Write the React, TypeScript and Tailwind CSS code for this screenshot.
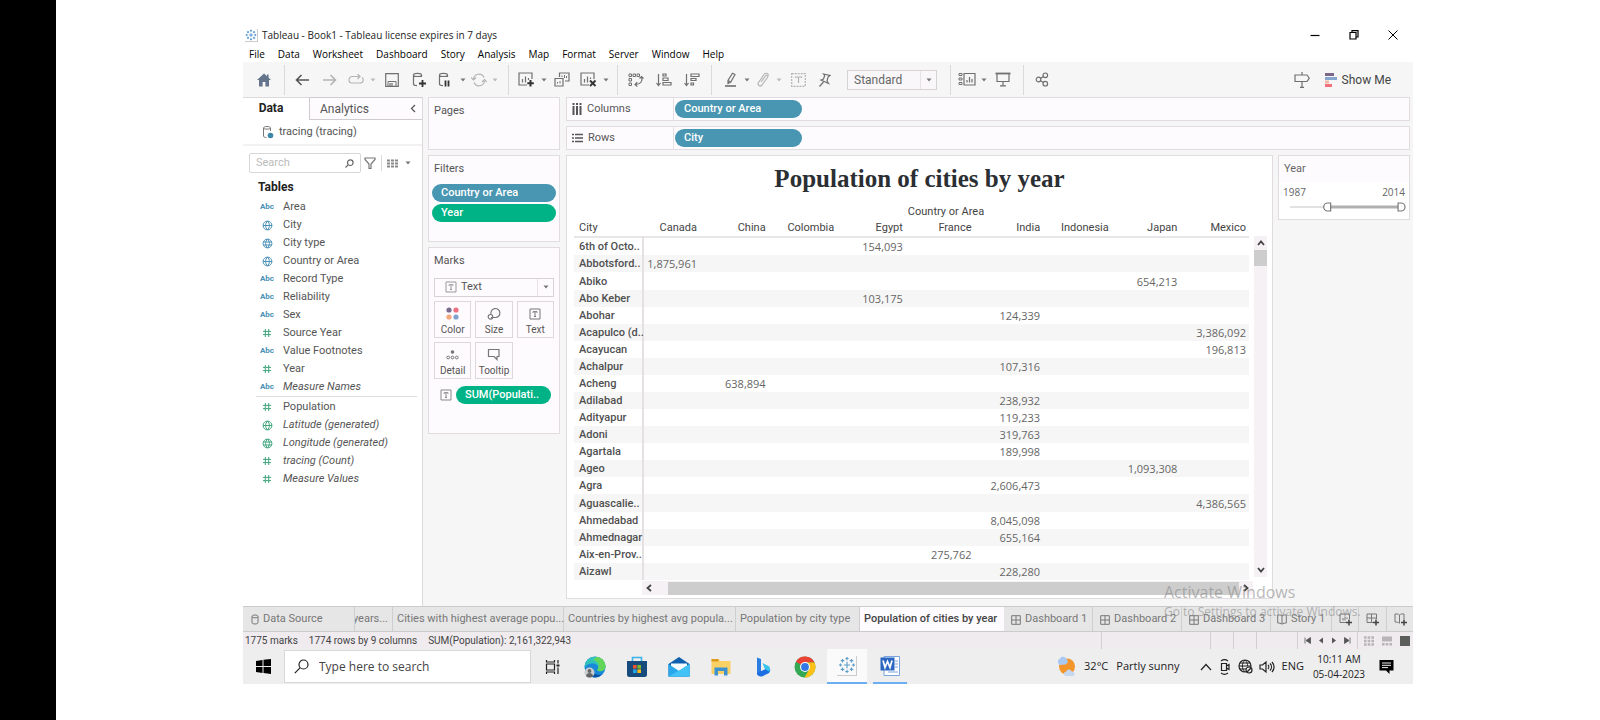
import type { ReactNode } from "react";

function Ico({ w = 16, h = 16, children, className = "" }: { w?: number; h?: number; children: ReactNode; className?: string }) {
  return (
    <svg width={w} height={h} viewBox={`0 0 ${w} ${h}`} fill="none" stroke="currentColor" strokeWidth="1.2" className={`shrink-0 ${className}`} aria-hidden="true">
      {children}
    </svg>
  );
}

function Tool({ label, width = "w-7", className = "text-[#707070]", children }: { label: string; width?: string; className?: string; children: ReactNode }) {
  return (
    <button type="button" aria-label={label} className={`flex h-7 shrink-0 items-center justify-center ${width} ${className}`}>
      {children}
    </button>
  );
}

function Caret({ className = "text-[#777]" }: { className?: string }) {
  return (
    <span className={`flex w-2.5 shrink-0 items-center justify-center ${className}`}>
      <Ico w={6} h={4}><path d="M0.5 0.5h5L3 3.6z" fill="currentColor" stroke="none" /></Ico>
    </span>
  );
}

const Sep = ({ className = "" }: { className?: string }) => <span className={`h-[30px] w-px shrink-0 bg-[#dcd8dc] ${className}`} />;

const TableauMark = ({ size, color }: { size: number; color: string }) => (
  <svg width={size} height={size} viewBox="0 0 20 20" stroke={color} strokeWidth="1.3" fill="none" aria-hidden="true">
    <path d="M10 6.500v7M6.500 10h7M10 1v3.600M8.200 2.800h3.600M10 15.400V19M8.200 17.200h3.600M1 10h3.600M2.800 8.200v3.600M15.400 10H19M17.200 8.200v3.600M5 3.200v4M3 5.200h4M15 3.200v4M13 5.200h4M5 12.800v4M3 14.800h4M15 12.800v4M13 14.800h4" />
  </svg>
);

function Globe({ lat }: { lat?: boolean }) {
  return (
    <Ico w={11} h={11}>
      <circle cx="5.500" cy="5.500" r="4.400" strokeWidth="1" />
      {lat ? <path d="M1.200 4h8.600M1.200 7h8.600M5.500 1c-2.500 2.600-2.500 6.400 0 9c2.500-2.600 2.500-6.400 0-9" strokeWidth="1" /> : <path d="M1.200 5.500h8.600M5.500 1c-2.500 2.600-2.500 6.400 0 9c2.500-2.600 2.500-6.400 0-9" strokeWidth="1" />}
    </Ico>
  );
}

const Hash = () => (
  <Ico w={10} h={10}><path d="M3.300 1v8M6.700 1v8M1 3.400h8M1 6.600h8" strokeWidth="1" /></Ico>
);

const TBox = ({ className = "" }: { className?: string }) => (
  <Ico w={12} h={12} className={className}>
    <path d="M1 1h10v10H1z" strokeWidth="1" />
    <path d="M4 4.800V3.700h4v1.100M6 3.700v4.800M5 8.500h2" strokeWidth="1" />
  </Ico>
);

type Kind = "abc" | "globe" | "globe2" | "hash";
type Field = { name: string; kind: Kind; green?: boolean; italic?: boolean };

const dimensions: Field[] = [
  { name: "Area", kind: "abc" },
  { name: "City", kind: "globe" },
  { name: "City type", kind: "globe2" },
  { name: "Country or Area", kind: "globe" },
  { name: "Record Type", kind: "abc" },
  { name: "Reliability", kind: "abc" },
  { name: "Sex", kind: "abc" },
  { name: "Source Year", kind: "hash", green: true },
  { name: "Value Footnotes", kind: "abc" },
  { name: "Year", kind: "hash", green: true },
  { name: "Measure Names", kind: "abc", italic: true },
];

const measures: Field[] = [
  { name: "Population", kind: "hash", green: true },
  { name: "Latitude (generated)", kind: "globe", green: true, italic: true },
  { name: "Longitude (generated)", kind: "globe2", green: true, italic: true },
  { name: "tracing (Count)", kind: "hash", green: true, italic: true },
  { name: "Measure Values", kind: "hash", green: true, italic: true },
];

function FieldRow({ f }: { f: Field }) {
  return (
    <li className="flex h-[18px] items-center gap-1.5 pl-[14px]">
      <span className={`flex w-5 justify-center ${f.green ? "text-[#3fa47c]" : "text-[#4a8fb5]"}`}>
        {f.kind === "abc" ? <span className="text-[8px] font-bold">Abc</span> : f.kind === "hash" ? <Hash /> : <Globe lat={f.kind === "globe2"} />}
      </span>
      <span className={f.italic ? "italic" : ""}>{f.name}</span>
    </li>
  );
}

const countries = ["Canada", "China", "Colombia", "Egypt", "France", "India", "Indonesia", "Japan", "Mexico"];
const rows: [string, number, string][] = [
  ["6th of Octo..", 3, "154,093"],
  ["Abbotsford..", 0, "1,875,961"],
  ["Abiko", 7, "654,213"],
  ["Abo Keber", 3, "103,175"],
  ["Abohar", 5, "124,339"],
  ["Acapulco (d..", 8, "3,386,092"],
  ["Acayucan", 8, "196,813"],
  ["Achalpur", 5, "107,316"],
  ["Acheng", 1, "638,894"],
  ["Adilabad", 5, "238,932"],
  ["Adityapur", 5, "119,233"],
  ["Adoni", 5, "319,763"],
  ["Agartala", 5, "189,998"],
  ["Ageo", 7, "1,093,308"],
  ["Agra", 5, "2,606,473"],
  ["Aguascalie..", 8, "4,386,565"],
  ["Ahmedabad", 5, "8,045,098"],
  ["Ahmednagar", 5, "655,164"],
  ["Aix-en-Prov..", 4, "275,762"],
  ["Aizawl", 5, "228,280"],
];

function Pill({ children, green, className = "" }: { children: ReactNode; green?: boolean; className?: string }) {
  return (
    <button type="button" className={`flex h-[18px] items-center rounded-full px-[9px] pt-px text-[11px] font-medium text-white ${green ? "bg-[#00b386]" : "bg-[#4996b2]"} ${className}`}>
      {children}
    </button>
  );
}

const card = "border border-[#e0dce0] bg-[#fefbfe]";

function TitleBar() {
  return (
    <header className="bg-white font-['Open_Sans',sans-serif] text-black">
      <div className="flex h-[18px] items-center pl-[2px]">
        <span className="flex size-[13px] items-center justify-center border-r border-b border-[#ccc]"><TableauMark size={12} color="#3d86c6" /></span>
        <h1 className="ml-1 text-[10px] text-[#222]">Tableau - Book1 - Tableau license expires in 7 days</h1>
        <div className="ml-auto flex items-center gap-[27px] pr-[14px]">
          <button type="button" aria-label="Minimize"><Ico w={12} h={12}><path d="M1.500 6.500h9" /></Ico></button>
          <button type="button" aria-label="Restore"><Ico w={12} h={12}><path d="M2 3.500h6v6.500H2zM4 3.500V1.600h6V8H8" /></Ico></button>
          <button type="button" aria-label="Close"><Ico w={12} h={12}><path d="M1.500 1.500l9 9M10.500 1.500l-9 9" strokeWidth="1" /></Ico></button>
        </div>
      </div>
      <nav className="flex h-[18px] items-center gap-[13px] pt-0.5 pl-[6px] text-[10px]">
        {["File", "Data", "Worksheet", "Dashboard", "Story", "Analysis", "Map", "Format", "Server", "Window", "Help"].map((m) => (
          <button type="button" key={m}>{m}</button>
        ))}
      </nav>
    </header>
  );
}

const Cyl = () => <path d="M1.500 3c0-2.200 8-2.200 8 0v2M1.500 3c0 2 8 2 8 0M1.500 3v9c0 1 1.500 1.600 3.500 1.600" />;

function Toolbar() {
  return (
    <div className="flex h-[35px] items-center bg-[#f6f6f6]">
      <Tool label="Home" width="w-[41px]" className="text-[#64748a]">
        <Ico w={16} h={14}><path d="M8 0.500L1 7h2v6.500h3.600V9h2.800v4.500H13V7h2L12.600 4.800V1.500h-1.600v1.800z" fill="currentColor" stroke="none" /></Ico>
      </Tool>
      <Sep />
      <Tool label="Undo" width="ml-[3px] w-7" className="text-[#555]"><Ico w={14} h={12}><path d="M14 6H1.500M6.500 1L1.500 6l5 5" strokeWidth="1.600" /></Ico></Tool>
      <Tool label="Redo" className="text-[#b4b4b4]"><Ico w={14} h={12}><path d="M0 6h12.500M7.500 1l5 5-5 5" strokeWidth="1.600" /></Ico></Tool>
      <Tool label="Replay" width="w-6" className="text-[#b4b4b4]"><Ico w={16} h={11}><path d="M12 2.500H4C0 2.500 0 9 4 9h8c3.500 0 4-4 2-5.500M9.500 0L12 2.500 9.500 5" /></Ico></Tool>
      <Caret className="text-[#bbb]" />
      <Tool label="Save"><Ico w={14} h={14}><path d="M.7.7h12.600v12.600H.7z" /><path d="M3 13V8.500h8V13" strokeWidth="1" /><path d="M5 10v3M7 10v3" /></Ico></Tool>
      <Tool label="New data source" width="w-[26px]"><Ico w={15} h={15}><Cyl /><path d="M10.500 8v7M7 11.500h7" stroke="#333" strokeWidth="1.800" /></Ico></Tool>
      <Tool label="Pause updates" width="w-[26px]"><Ico w={14} h={15}><Cyl /><path d="M7.500 8.500v6M10.500 8.500v6" stroke="#333" strokeWidth="1.800" /></Ico></Tool>
      <Caret />
      <Tool label="Refresh" width="w-[22px]" className="text-[#b4b4b4]"><Ico w={16} h={14}><path d="M2.500 6a5.500 5.500 0 0 1 10.500-1.500M13.500 8A5.500 5.500 0 0 1 3 9.500M0 4.500l2.500 2.500L5 4.500M11 9l2.500-2.500L16 9" /></Ico></Tool>
      <Caret className="text-[#bbb]" />
      <Sep className="ml-2" />
      <Tool label="New worksheet" width="ml-1 w-[26px]"><Ico w={17} h={15}><path d="M9 13H1V1h13v6M4.500 10.500V7M7.500 10.500v-6M10.500 8V6" /><path d="M12.500 8v6.500M9.300 11.300h6.500" stroke="#333" strokeWidth="2" /></Ico></Tool>
      <Caret />
      <Tool label="Duplicate" width="w-[26px]"><Ico w={16} h={15}><path d="M5.500 5V1H15v8h-4M1 6.500h8V14H1z" /><path d="M8 5V3.500M10.500 6V3M12.500 6V4M3.500 11.500V10M6 11.500V9" strokeWidth="1" /></Ico></Tool>
      <Tool label="Clear sheet" width="w-[26px]"><Ico w={17} h={15}><path d="M9 13H1V1h13v6M4.500 10.500V7M7.500 10.500v-6M10.500 7V5.500" /><path d="M10 8.500l5.500 5.500M15.500 8.500L10 14" stroke="#333" strokeWidth="1.800" /></Ico></Tool>
      <Caret />
      <Sep className="ml-1.5" />
      <Tool label="Swap rows and columns" width="ml-1 w-7"><Ico w={16} h={14}><path d="M1 1h2.500v2.500H1zM5 1h2.500v2.500H5zM9 1h2.500v2.500H9zM1 5.500h2.500V8H1zM1 10h2.500v2.500H1z" strokeWidth="1" /><path d="M13.500 4c1.500 4-1 7.500-6 7.500M11.500 5.500l2-2 2 2M9.300 9.300L7 11.500l2.300 2" /></Ico></Tool>
      <Tool label="Sort ascending"><Ico w={16} h={14}><path d="M2.500 1v11.500M.5 10l2 2.500 2-2.500M7 1h3v2H7zM7 5h5v2.500H7zM7 9.500h8v2.500H7z" /></Ico></Tool>
      <Tool label="Sort descending"><Ico w={16} h={14}><path d="M2.500 1v11.500M.5 10l2 2.500 2-2.500M7 1h8v2.500H7zM7 5.500h5v2H7zM7 10h2.500v2H7z" /></Ico></Tool>
      <Sep className="ml-[5px]" />
      <Tool label="Highlight" width="ml-1.5 w-6"><Ico w={13} h={15}><path d="M1 14h11" strokeWidth="1.600" /><path d="M4 11.500L4 8.500 8.500 1.200 11 2.500 6.800 10zM4 8.500l2.800 1.500" /></Ico></Tool>
      <Caret />
      <Tool label="Group members" width="w-[22px]" className="text-[#b4b4b4]"><Ico w={14} h={15}><path d="M5 10l4.500-6c1-1.500 3 0 2 1.500L6 13c-1.800 2.200-5 0-3.500-2.500L8 2.500c1.500-2 4.500-1.500 4.500 1" /></Ico></Tool>
      <Caret className="text-[#bbb]" />
      <Tool label="Show mark labels" className="text-[#b4b4b4]"><Ico w={15} h={14}><path d="M.7.7h13.600v12.600H.7z" strokeDasharray="2 1" /><path d="M4.500 5V4h6v1M7.500 4v6" /></Ico></Tool>
      <Tool label="Fix axes" width="w-6"><Ico w={13} h={14}><path d="M5.500 1l6.500 1.500-2 1.500-1 4 1.500 2.500-7.500-3.500L5.500 6l1.200-3.500zM5.500 9L1.500 13.500" /></Ico></Tool>
      <span className="relative ml-[11px] flex h-5 w-[90px] shrink-0 border border-[#d6d2d6] bg-[#f9f7f9]">
        <select aria-label="Fit" className="w-full appearance-none pl-[6px] font-[Roboto,sans-serif] text-[12px] text-[#666] outline-none"><option>Standard</option></select>
        <span className="pointer-events-none absolute inset-y-0 right-0 flex w-4 items-center justify-center border-l border-[#e6e2e6]"><Caret /></span>
      </span>
      <Sep className="ml-[13px]" />
      <Tool label="Show or hide cards" width="ml-1 w-6"><Ico w={18} h={15}><path d="M1 1.500h3v2H1zM1 6h3v2H1zM1 10.500h3v2H1z" strokeWidth="1" /><path d="M6 1.500h11V13H6zM9 10.500V8M11.500 10.500V5M14 10.500V7" /></Ico></Tool>
      <Caret />
      <Tool label="Presentation mode"><Ico w={16} h={15}><path d="M.5 1.500h15" strokeWidth="1.800" /><path d="M2 2v7.500h12V2M8 9.500v4M5 13.800h6" /></Ico></Tool>
      <Sep className="ml-1.5" />
      <Tool label="Share" width="ml-1.5 w-6"><Ico w={14} h={15}><circle cx="3.500" cy="7.500" r="2.300" /><circle cx="10.300" cy="3.300" r="2.300" /><circle cx="10.300" cy="11.700" r="2.300" /><path d="M5.500 6.500l3-2M5.500 8.800l3 1.800" /></Ico></Tool>
      <div className="ml-auto flex items-center pr-[22px]">
        <Tool label="Guide"><Ico w={16} h={16}><path d="M8 0v3M8 9.500V15M6 15.300h4M1 3h12l2.300 3.200L13 9.500H1z" /></Ico></Tool>
        <button type="button" className="ml-2 flex items-center gap-1 font-[Roboto,sans-serif] text-[12px] text-[#444]">
          <Ico w={14} h={14}>
            <path d="M1 0h9v3H1z" fill="#7b6888" stroke="none" /><path d="M1 4h12v3H1z" fill="#85a6cf" stroke="none" /><path d="M1 7.500h4v3H1z" fill="#f4b9a4" stroke="none" /><path d="M1 11h7v3H1z" fill="#f0717c" stroke="none" />
          </Ico>
          Show Me
        </button>
      </div>
    </div>
  );
}

function DataPane() {
  return (
    <aside className="flex w-[180px] shrink-0 flex-col border-r border-[#dcd8dc] bg-white text-[11px] text-[#555]">
      <div className="flex h-[23px]">
        <button type="button" className="w-[66px] border-t border-[#dcd8dc] pb-0.5 pr-2.5 text-[12px] font-bold text-[#222]">Data</button>
        <button type="button" className="flex flex-1 items-center justify-between border-t border-b border-l border-[#cfcbcf] bg-[#fefbfe] pr-1.5 pl-[10px] text-[12px] text-[#555]">
          Analytics
          <Ico w={6} h={9}><path d="M5 1L1.500 4.500 5 8" /></Ico>
        </button>
      </div>
      <div className="flex h-[26px] items-center gap-[5px] border-b-2 border-[#f3f1f3] pl-[19px]">
        <Ico w={12} h={14} className="text-[#777]"><path d="M1.500 3c0-2 7-2 7 0v3M1.500 3c0 1.500 7 1.500 7 0M1.500 3v8c0 1 1.500 1.500 3 1.500" strokeWidth="1" /><circle cx="8.500" cy="10.500" r="2.800" fill="#3d86a8" stroke="none" /></Ico>
        tracing (tracing)
      </div>
      <div className="mt-[7px] flex items-center pl-[6px]">
        <label className="flex h-5 w-[112px] items-center rounded-[2px] border border-[#d9d5d9] pr-1.5 pl-1.5">
          <input aria-label="Search fields" placeholder="Search" className="w-0 flex-1 bg-transparent outline-none placeholder:text-[#bbb]" />
          <Ico w={9} h={9} className="text-[#666]"><circle cx="5.300" cy="3.700" r="2.800" /><path d="M3.200 5.800L.5 8.500" /></Ico>
        </label>
        <button type="button" aria-label="Filter fields" className="ml-[3px] text-[#777]"><Ico w={12} h={12}><path d="M1 1h10v1.500L7 7v4.500H5V7L1 2.500z" /></Ico></button>
        <span className="mx-[5px] h-4 w-px bg-[#dcd8dc]" />
        <button type="button" aria-label="View as list" className="flex items-center gap-[5px] text-[#888]">
          <Ico w={11} h={9}><path d="M0 1.500h11M0 4.500h11M0 7.500h11" strokeWidth="2" strokeDasharray="3 1" /></Ico>
          <Caret />
        </button>
      </div>
      <h2 className="mt-[5px] h-[18px] pl-[15px] text-[12px] leading-[18px] font-bold text-[#222]">Tables</h2>
      <ul className="mt-[2px]">{dimensions.map((f) => <FieldRow key={f.name} f={f} />)}</ul>
      <ul className="mr-[5px] ml-[13px] border-t border-[#dedede] pt-px [&>li]:pl-px">{measures.map((f) => <FieldRow key={f.name} f={f} />)}</ul>
    </aside>
  );
}

function MarkButton({ label, children }: { label: string; children: ReactNode }) {
  return (
    <button type="button" className="flex h-[37px] flex-col items-center justify-between border border-[#dcd8dc] bg-[#fefbfe] pt-1 pb-px text-[10px] leading-3 text-[#555]">
      <span className="flex h-4 items-center text-[#777]">{children}</span>
      {label}
    </button>
  );
}

function Cards() {
  return (
    <div className="mr-px flex w-[132px] shrink-0 flex-col gap-[5px] text-[11px] text-[#555]">
      <section className={`${card} h-[53px] px-[5px] pt-[5px]`}><h2>Pages</h2></section>
      <section className={`${card} h-[87px] px-[3px] pt-[5px]`}>
        <h2 className="px-0.5">Filters</h2>
        <div className="mt-[6px] flex flex-col gap-[2px]">
          <Pill>Country or Area</Pill>
          <Pill green>Year</Pill>
        </div>
      </section>
      <section className={`${card} h-[187px] px-[5px] pt-[5px]`}>
        <h2>Marks</h2>
        <span className="relative mt-2 flex h-[19px] items-center border border-[#d6d2d6] pl-[10px]">
          <TBox className="text-[#999]" />
          <select aria-label="Mark type" className="h-full flex-1 appearance-none pl-1 text-[11px] text-[#555] outline-none"><option>Text</option></select>
          <span className="pointer-events-none absolute inset-y-0 right-0 flex w-4 items-center justify-center border-l border-[#e6e2e6]"><Caret /></span>
        </span>
        <div className="mt-1 grid grid-cols-3 gap-1">
          <MarkButton label="Color"><Ico w={13} h={13}><g stroke="none"><circle cx="3" cy="3" r="2.600" fill="#7b6a90" /><circle cx="10" cy="3" r="2.600" fill="#ef6f81" /><circle cx="3" cy="10" r="2.600" fill="#f3a77c" /><circle cx="10" cy="10" r="2.600" fill="#7fa1cc" /></g></Ico></MarkButton>
          <MarkButton label="Size"><Ico w={14} h={14}><path d="M4 7A4.500 4.500 0 1 1 8.500 10.500H4" /><circle cx="3.500" cy="9.800" r="2.300" /></Ico></MarkButton>
          <MarkButton label="Text"><TBox /></MarkButton>
          <MarkButton label="Detail"><Ico w={13} h={13}><circle cx="6.500" cy="4" r="1.800" fill="currentColor" stroke="none" /><circle cx="2.200" cy="9.500" r="1.400" strokeWidth="1" /><circle cx="6.500" cy="9.500" r="1.400" strokeWidth="1" /><circle cx="10.800" cy="9.500" r="1.400" strokeWidth="1" /></Ico></MarkButton>
          <MarkButton label="Tooltip"><Ico w={13} h={13}><path d="M1.500 1.500h10.500v7H10V11.500L7 8.500H1.500z" /></Ico></MarkButton>
        </div>
        <div className="mt-[7px] flex items-center pr-[3px] pl-[6px]">
          <TBox className="text-[#888]" />
          <Pill green className="ml-1 flex-1">SUM(Populati..</Pill>
        </div>
      </section>
    </div>
  );
}

function Shelf({ name, icon, pill }: { name: string; icon: ReactNode; pill: string }) {
  return (
    <div className={`${card} flex h-6 items-center`}>
      <div className="flex h-full w-[107px] items-center gap-[5px] border-r border-[#e4e0e4] pl-[5px] text-[11px] text-[#555]">{icon}{name}</div>
      <Pill className="ml-px w-[127px]">{pill}</Pill>
    </div>
  );
}

function Crosstab() {
  return (
    <section className="flex min-w-0 flex-1 flex-col border border-[#e0dce0] bg-white pr-[5px] pb-[3px] pl-[7px]">
      <h2 className="mt-[9px] pr-0.5 text-center font-['Liberation_Serif',serif] text-[25px] leading-7 font-bold text-[#2b2f33]">Population of cities by year</h2>
      <div className="mt-[10px] flex gap-[5px]">
        <div className="min-w-0 flex-1">
          <table className="h-[377px] w-full table-fixed border-collapse text-[11px] leading-[13px] text-[#666]">
            <colgroup><col className="w-[69px]" /><col className="w-[57px]" />{countries.slice(1).map((c) => <col key={c} />)}</colgroup>
            <thead className="text-[#444]">
              <tr className="h-4"><td /><th colSpan={9} className="text-center font-normal">Country or Area</th></tr>
              <tr className="h-[18px] border-b-2 border-[#e8e6e8]">
                <th className="pl-[5px] text-left font-normal">City</th>
                {countries.map((c) => <th key={c} scope="col" className="pr-[3px] text-right font-normal">{c}</th>)}
              </tr>
            </thead>
            <tbody>
              {rows.map(([city, col, value]) => (
                <tr key={city} className="even:bg-[#f6f6f6]">
                  <th scope="row" className="border-r-2 border-[#e4e0e4] pl-[5px] text-left font-medium whitespace-nowrap text-[#505050]">{city}</th>
                  {countries.map((c, i) => <td key={c} className="pr-[3px] text-right font-['Open_Sans',sans-serif]">{i === col ? value : ""}</td>)}
                </tr>
              ))}
            </tbody>
          </table>
        </div>
        <div className="mt-[33px] mb-[3px] flex w-[13px] flex-col items-center bg-[#f5f1f5] text-[#444]">
          <button type="button" aria-label="Scroll up" className="flex h-[14px] items-center"><Ico w={8} h={6}><path d="M1 5l3-3.500L7 5" strokeWidth="1.800" /></Ico></button>
          <span className="h-4 w-full bg-[#cdcdcd]" />
          <button type="button" aria-label="Scroll down" className="mt-auto flex h-[14px] items-center"><Ico w={8} h={6}><path d="M1 1l3 3.500L7 1" strokeWidth="1.800" /></Ico></button>
        </div>
      </div>
      <div className="mt-px mr-[14px] ml-[68px] flex h-[14px] items-center bg-[#f5f1f5] text-[#444]">
        <button type="button" aria-label="Scroll left" className="flex w-[26px] pl-1"><Ico w={6} h={8}><path d="M5 1L1.500 4 5 7" strokeWidth="1.800" /></Ico></button>
        <span className="h-[13px] flex-1 bg-[#cdcdcd]" />
        <button type="button" aria-label="Scroll right" className="flex w-[14px] justify-center"><Ico w={6} h={8}><path d="M1 1l3.500 3L1 7" strokeWidth="1.800" /></Ico></button>
      </div>
    </section>
  );
}

function YearFilter() {
  return (
    <section className="h-[65px] w-[132px] shrink-0 border border-[#e0dce0] bg-white text-[11px] text-[#666]">
      <h2 className="h-[26px] bg-[#fefbfe] pt-[5px] pl-[5px]">Year</h2>
      <div className="mt-0.5 flex justify-between px-1 font-['Open_Sans',sans-serif] text-[10px] leading-4"><span>1987</span><span>2014</span></div>
      <div className="relative mt-px mr-[3px] ml-[11px] h-[12px]">
        <svg className="absolute inset-0 size-full" viewBox="0 0 117 12" preserveAspectRatio="none" fill="none" aria-hidden="true">
          <path d="M0 6h36" stroke="#e2e2e2" strokeWidth="2" /><path d="M41 6h68" stroke="#b0b0b0" strokeWidth="3" />
          <path d="M41 2h-3a4 4 0 0 0 0 8h3zM109 2h3a4 4 0 0 1 0 8h-3z" fill="#fff" stroke="#777" strokeWidth="1.200" />
        </svg>
        <input type="range" aria-label="Start year" min="1987" max="2014" defaultValue="1996" className="absolute inset-y-0 left-0 w-1/2 opacity-0" />
        <input type="range" aria-label="End year" min="1987" max="2014" defaultValue="2014" className="absolute inset-y-0 right-0 w-1/2 opacity-0" />
      </div>
    </section>
  );
}

const GridIco = () => <Ico w={10} h={10}><path d="M.7.7h8.600v8.600H.7zM5 .7v8.600M.7 5h8.600" strokeWidth="1" /></Ico>;
const BookIco = () => <Ico w={10} h={11}><path d="M5 2C3.500.8 2 .8.7 1v8c1.500 0 3 .2 4.300 1.200C6.300 9.200 7.800 9 9.300 9V1C8 .8 6.500.8 5 2zM5 2v8" strokeWidth="1" /></Ico>;
const Plus = () => <path d="M10 6.500v6M7 9.500h6" stroke="#444" strokeWidth="1.500" />;

function SheetTabs() {
  const tab = "flex shrink-0 items-center gap-1 border-r border-[#cfcfcf] pt-px whitespace-nowrap";
  return (
    <nav className="flex h-[26px] overflow-hidden border-y border-[#cccacc] bg-[#e6e6e6] text-[11px] text-[#777]">
      <button type="button" className={`${tab} w-[112px] pl-2`}><Ico w={8} h={11}><path d="M1 2.500c0-2 6-2 6 0v6c0 2-6 2-6 0z" strokeWidth="1" /><path d="M1 2.800c0 1.300 6 1.300 6 0" strokeWidth="1" /></Ico>Data Source</button>
      <button type="button" className={`${tab} w-[38px] justify-end overflow-hidden pr-1`}>years...</button>
      <button type="button" className={`${tab} w-[171px] pl-1`}>Cities with highest average popu...</button>
      <button type="button" className={`${tab} w-[172px] pl-1`}>Countries by highest avg popula...</button>
      <button type="button" className={`${tab} w-[124px] pl-1`}>Population by city type</button>
      <button type="button" aria-current="page" className="flex w-[144px] shrink-0 items-center bg-[#fefbfe] pl-1 font-medium whitespace-nowrap text-[#444]">Population of cities by year</button>
      {["Dashboard 1", "Dashboard 2", "Dashboard 3"].map((d) => (
        <button type="button" key={d} className={`${tab} w-[89px] pl-[7px]`}><GridIco />{d}</button>
      ))}
      <button type="button" className={`${tab} w-[61px] pl-1.5`}><BookIco />Story 1</button>
      <button type="button" aria-label="New worksheet" className={`${tab} w-[27px] justify-center`}><Ico w={13} h={13}><path d="M7 9.500H1V1h9.500v5M4 7.500V5M6 7.500v-4M8 6V4.500" strokeWidth="1" /><Plus /></Ico></button>
      <button type="button" aria-label="New dashboard" className={`${tab} w-7 justify-center`}><Ico w={13} h={13}><path d="M7 9.500H1V1h9.500v5M5.500 1v8.500M1 5h9.500" strokeWidth="1" /><Plus /></Ico></button>
      <button type="button" aria-label="New story" className="flex min-w-0 flex-1 items-center justify-center"><Ico w={13} h={13}><path d="M5.500 2C4 .8 2.500.8 1 1v8c1.500 0 3 .2 4.500 1.200V2C7 .8 8.500.8 10 1v5" strokeWidth="1" /><Plus /></Ico></button>
    </nav>
  );
}

function StatusBar() {
  const line = "h-full w-px bg-[#d2ced2]";
  return (
    <div className="flex h-[17px] items-center bg-[#efebef] pl-0.5 text-[10px] text-[#444]">
      <span>1775 marks</span><span className="ml-[11px]">1774 rows by 9 columns</span><span className="ml-[11px]">SUM(Population): 2,161,322,943</span>
      <div className="ml-auto flex h-full items-center">
        <span className={`${line} mr-[108px]`} /><span className={`${line} mr-[22px]`} /><span className={`${line} mr-[22px]`} /><span className={`${line} mr-[40px]`} /><span className={line} />
        <div className="flex items-center gap-[7px] px-[6px] text-[#555]">
          <button type="button" aria-label="First"><Ico w={7} h={7}><path d="M1 .5v6M6.500.5v6L2 3.500z" fill="currentColor" strokeWidth=".8" /></Ico></button>
          <button type="button" aria-label="Previous"><Ico w={6} h={7}><path d="M5 .5v6L1 3.500z" fill="currentColor" stroke="none" /></Ico></button>
          <button type="button" aria-label="Next"><Ico w={6} h={7}><path d="M1 .5v6L5 3.500z" fill="currentColor" stroke="none" /></Ico></button>
          <button type="button" aria-label="Last"><Ico w={7} h={7}><path d="M6 .5v6M.5.5v6L5 3.500z" fill="currentColor" strokeWidth=".8" /></Ico></button>
        </div>
        <span className={line} />
        <div className="flex items-center gap-2 pr-[3px] pl-[6px]">
          <button type="button" aria-label="Show tabs" className="text-[#b8b4b8]"><Ico w={10} h={10}><path d="M0 1.500h10M0 5h10M0 8.500h10" strokeWidth="2.400" strokeDasharray="2.600 1.100" /></Ico></button>
          <button type="button" aria-label="Show filmstrip" className="text-[#b8b4b8]"><Ico w={10} h={10}><path d="M0 3h10" strokeWidth="5" /><path d="M0 8.300h10" strokeWidth="2.400" strokeDasharray="2.600 1.100" /></Ico></button>
          <button type="button" aria-label="Show sheet sorter" className="text-[#5c5e5c]"><Ico w={10} h={10}><path d="M0 0h10v10H0z" fill="currentColor" stroke="none" /></Ico></button>
        </div>
      </div>
    </div>
  );
}

function Taskbar() {
  const app = "flex h-full w-[42px] shrink-0 items-center justify-center";
  return (
    <footer className="flex h-[35px] items-center bg-[#eee] font-['Open_Sans',sans-serif] text-[#222]">
      <button type="button" aria-label="Start" className="flex w-[41px] justify-center"><Ico w={15} h={15}><path d="M0 2l6.500-1v6H0zM7.500.8L15 0v7H7.500zM0 8h6.500v6L0 13zM7.500 8H15v7l-7.500-.9z" fill="#000" stroke="none" /></Ico></button>
      <label className="flex h-[33px] w-[247px] items-center gap-2.5 border border-[#d8d8d8] bg-white pl-[9px]">
        <Ico w={15} h={15}><circle cx="9.500" cy="5.500" r="4.500" /><path d="M6 8.800L.8 14.200" /></Ico>
        <input aria-label="Search Windows" placeholder="Type here to search" className="w-0 flex-1 bg-transparent pt-px text-[12px] outline-none placeholder:text-[#444]" />
      </label>
      <button type="button" aria-label="Task view" className={app}><Ico w={15} h={14}><path d="M1.500 4h8v6h-8zM1.500 0v2h8V0M1.500 14v-2h8v2M13 0v3.500M13 7.500V14" /><path d="M11.500 5.500h3" strokeWidth="2" /></Ico></button>
      <div className="ml-px flex h-full items-center">
        <button type="button" aria-label="Edge" className={app}>
          <svg width="22" height="22" viewBox="0 0 22 22" aria-hidden="true"><circle cx="11" cy="11" r="10.500" fill="#1789d8" /><path d="M.7 9.500A10.500 10.500 0 0 1 21.500 10c0 4-3 5.500-6.500 5.200-2-.3-1.800-1.500-1-2.700 1-2.500-1.500-5-5-5C5 7.500 2 8.500.7 12z" fill="#31c3b9" /><path d="M13 .8c5 .8 8.500 4.800 8.500 9.200 0 4-3 5.500-6.500 5.200-2-.3-1.800-1.500-1-2.700C16 9 14 5 9 4z" fill="#63d65a" /><path d="M8 12c-1 5 4 7.500 10 6.500-4 4.500-11.500 3.800-13-1z" fill="#0b55a5" /><circle cx="5.500" cy="16.500" r="5" fill="#c9cdd0" /><circle cx="5.500" cy="15" r="1.900" fill="#666" /><path d="M2 20c.5-4 6.500-4 7 0-2 2-5 2-7 0z" fill="#666" /></svg>
        </button>
        <button type="button" aria-label="Store" className={app}>
          <svg width="22" height="24" viewBox="0 0 22 22" aria-hidden="true"><path d="M6.500 6V1.500h9V6" fill="none" stroke="#3bb2ea" strokeWidth="1.600" /><path d="M1 5h20v13.500a2.500 2.500 0 0 1-2.500 2.500h-15A2.500 2.500 0 0 1 1 18.500z" fill="#174b7c" /><path d="M7 9h3.600v3.600H7z" fill="#ef5430" /><path d="M11.400 9H15v3.600h-3.600z" fill="#7fba2a" /><path d="M7 13.400h3.600V17H7z" fill="#21a6e8" /><path d="M11.400 13.400H15V17h-3.600z" fill="#fbbc14" /></svg>
        </button>
        <button type="button" aria-label="Mail" className={app}>
          <svg width="22" height="22" viewBox="0 0 22 22" aria-hidden="true"><path d="M.5 8L11 1l10.500 7v12.500H.5z" fill="#0e5fae" /><path d="M3 7.500h16V16H3z" fill="#f4fbff" /><path d="M.5 8L11 15l10.500-7v12.500H.5z" fill="#2aa7ea" /><path d="M.5 20.500L14 12.800 21.500 8v12.500z" fill="#43c3f5" /></svg>
        </button>
        <button type="button" aria-label="File Explorer" className={app}>
          <svg width="20" height="20" viewBox="0 0 20 20" aria-hidden="true"><path d="M.5 2h7l1.500 2h10.500v13H.5z" fill="#fbd064" /><path d="M.5 2h7v2.500h-7z" fill="#dc9a1c" /><path d="M3.500 18.500v-8h13v8h-3.500V14H7v4.500z" fill="#3e93cf" /></svg>
        </button>
        <button type="button" aria-label="Bing" className={app}>
          <svg width="15" height="20" viewBox="0 0 15 20" aria-hidden="true"><path d="M1 .5L5 2v14l-4 2z" fill="#2a7de1" /><path d="M1 16l9.500-4.500L14 12c.8 2-.5 3.800-2.500 4.800l-5 2.400C3.500 20 1 18.500 1 16z" fill="#1b6fe0" /><path d="M6.500 6l6 3c2 1.200 1.800 4.500.5 5.800-.8-1.500-4-2-4.500-3.500z" fill="#36c4ea" /></svg>
        </button>
        <button type="button" aria-label="Chrome" className={app}>
          <svg width="22" height="22" viewBox="0 0 22 22" aria-hidden="true"><circle cx="11" cy="11" r="10.500" fill="#34a853" /><path d="M11 11L1.900 5.800A10.500 10.500 0 0 1 20.500 6.500H11z" fill="#ea4335" /><path d="M11 6.500h9.500A10.500 10.500 0 0 1 10.500 21.500l5-8.500z" fill="#fbc116" /><circle cx="11" cy="11" r="5" fill="#fff" /><circle cx="11" cy="11" r="3.900" fill="#3478e5" /></svg>
        </button>
        <button type="button" aria-label="Tableau" className="ml-px flex h-full w-10 shrink-0 items-center justify-center border-b-2 border-[#6caef0] bg-[#fafafa]"><span className="flex size-5 items-center justify-center border-r border-b border-[#ccc]"><TableauMark size={18} color="#5f9ec8" /></span></button>
        <button type="button" aria-label="Word" className="ml-1.5 flex h-full w-[34px] shrink-0 items-center justify-center border-b-2 border-[#6caef0]">
          <svg width="20" height="20" viewBox="0 0 20 20" aria-hidden="true"><path d="M4 .5h15.500v19H4z" fill="#fff" stroke="#7aa5dc" /><path d="M15 5h3M15 8h3M15 11h3M8 16h10" stroke="#7aa5dc" /><path d="M.5 1.500h14v13H.5z" fill="#2a66c0" /><path d="M3 4.500l2 7 2.500-6 2.500 6 2-7" fill="none" stroke="#fff" strokeWidth="1.700" /></svg>
        </button>
      </div>
      <div className="ml-auto flex h-full items-center text-[11px]">
        <svg width="20" height="22" viewBox="0 0 20 22" aria-hidden="true"><circle cx="11" cy="10.500" r="8" fill="#f2952a" /><path d="M4 9a3.500 3.500 0 0 1 0-6.500C5 0 9.500 0 10 3c2.500.5 2.500 5-1 5.500z" fill="#a9c9f3" /><path d="M10 20c-3-.3-3-4 0-4.300.8-3 5-3 5.700-.2 3.500-.2 4.300 4 1 4.500z" fill="#c6d7f2" /></svg>
        <span className="ml-2">32°C</span><span className="ml-2">Partly sunny</span>
        <div className="ml-5 flex items-center gap-[6px]">
          <Ico w={12} h={8}><path d="M1 7l5-5.500L11 7" /></Ico>
          <Ico w={14} h={16}><path d="M3.500 4.500h5v7h-5zM8.500 7l2.500-1.500v5L8.500 9M3 2c2-1.500 5-1.500 7 0M3 14c2 1.500 5 1.500 7 0" /></Ico>
          <Ico w={15} h={15}><circle cx="7" cy="7" r="6" /><path d="M1 7h12M2 4h10M2 10h6M7 1c-3.500 3.500-3.500 8.500 0 12M7 1c2 2 2.600 4 2.600 6" strokeWidth="1" /><circle cx="11" cy="11" r="3" fill="#eee" /><path d="M9 13l4-4" /></Ico>
          <Ico w={16} h={14}><path d="M1 5h2.500L7 2v10L3.500 9H1zM9 5c1 1 1 3 0 4M11 3.500c2 2 2 5 0 7M13 2c2.500 3 2.500 7 0 10" /></Ico>
        </div>
        <span className="ml-[7px]">ENG</span>
        <div className="ml-2 w-[54px] text-center text-[10px] leading-[15px] whitespace-nowrap">10:11 AM<br />05-04-2023</div>
        <Ico w={15} h={16} className="mr-[19px] ml-[13px]"><path d="M.5 1h14v10.500h-4V15L7 11.500H.5z" fill="#000" stroke="none" /><path d="M3 4h9M3 6.300h9M3 8.600h6" stroke="#eee" strokeWidth="1" /></Ico>
      </div>
    </footer>
  );
}

export default function App() {
  return (
    <div className="flex min-h-screen bg-white">
      <div className="w-14 shrink-0 bg-black" />
      <div className="min-w-0 flex-1 px-[187px] pt-[26px] pb-9">
        <main className="relative flex flex-col overflow-hidden font-[Roboto,sans-serif]">
          <TitleBar />
          <Toolbar />
          <div className="flex gap-[5px] bg-[#f6f6f6] pr-[3px]">
            <DataPane />
            <Cards />
            <div className="flex min-w-0 flex-1 flex-col gap-[5px] pb-[7px]">
              <Shelf name="Columns" pill="Country or Area" icon={<Ico w={10} h={12} className="text-[#555]"><path d="M1.500 0v12M5 0v12M8.500 0v12" strokeWidth="2" strokeDasharray="2 1 9" /></Ico>} />
              <Shelf name="Rows" pill="City" icon={<Ico w={11} h={10} className="text-[#555]"><path d="M0 1.500h11M0 5h11M0 8.500h11" strokeWidth="1.600" strokeDasharray="2 1 9" /></Ico>} />
              <div className="flex min-h-0 flex-1 gap-[5px]">
                <Crosstab />
                <YearFilter />
              </div>
            </div>
          </div>
          <SheetTabs />
          <StatusBar />
          <Taskbar />
          <div className="pointer-events-none absolute right-[49px] bottom-[62px] w-[200px] font-['Open_Sans',sans-serif] text-[#888]/60">
            <p className="text-[16px] leading-5">Activate Windows</p>
            <p className="text-[12px] leading-5 whitespace-nowrap">Go to Settings to activate Windows.</p>
          </div>
        </main>
      </div>
    </div>
  );
}
